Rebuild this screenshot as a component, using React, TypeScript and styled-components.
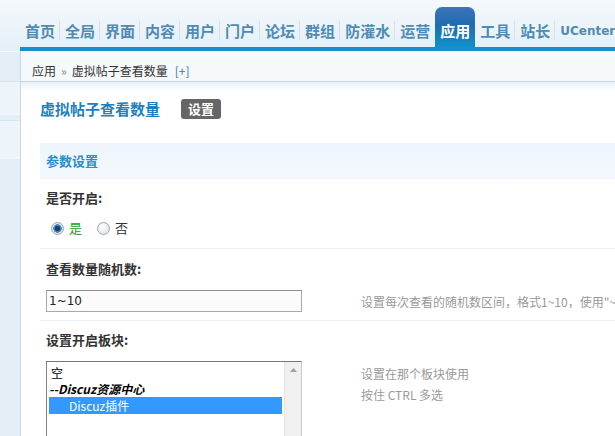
import styled, { createGlobalStyle } from "styled-components";

const GlobalStyle = createGlobalStyle`
  html, body {
    margin: 0;
    padding: 0;
  }
  body {
    width: 615px;
    height: 436px;
    overflow: hidden;
    background: #fff;
    font-family: "Noto Sans CJK SC", "DejaVu Sans", sans-serif;
    font-size: 12px;
    color: #333;
  }
`;

const Page = styled.div`
  display: flex;
  flex-direction: column;
  width: 615px;
  height: 436px;
  overflow: hidden;
`;

const Header = styled.header`
  height: 51px;
  flex-shrink: 0;
  background: linear-gradient(#f4f9fc, #e5eff7);
  display: flex;
  flex-direction: column;
  justify-content: flex-end;
`;

const Nav = styled.nav`
  display: flex;
  align-items: flex-end;
  height: 40px;
  padding-left: 20px;
`;

const NavItem = styled.a<{ $active?: boolean; $sep?: boolean; $latin?: boolean }>`
  position: relative;
  box-sizing: border-box;
  height: 40px;
  padding: 15px 5px 0;
  line-height: 18px;
  font-size: ${(p) => (p.$latin ? "12px" : "15px")};
  font-family: ${(p) =>
    p.$latin ? '"DejaVu Sans", sans-serif' : '"Noto Sans CJK SC", sans-serif'};
  font-weight: 700;
  white-space: nowrap;
  color: ${(p) => (p.$active ? "#fff" : "#4f8bb3")};
  border-radius: 7px 7px 0 0;
  background: ${(p) =>
    p.$active ? "linear-gradient(#3d74b6, #1e6db3 45%, #1190c9)" : "transparent"};

  &::after {
    content: "";
    display: ${(p) => (p.$sep ? "block" : "none")};
    position: absolute;
    right: 0;
    top: 14px;
    width: 1px;
    height: 19px;
    background: #d2e1ec;
  }
`;

const NavBar = styled.div`
  height: 4px;
  margin-left: 20px;
  background: #1590c8;
`;

const Body = styled.div`
  flex: 1;
  display: flex;
  min-height: 0;
`;

const Sidebar = styled.aside`
  width: 20px;
  flex-shrink: 0;
  background: #e4eef6;
  display: flex;
  flex-direction: column;
`;

const SideItem = styled.div<{ $h: number; $light?: boolean }>`
  height: ${(p) => p.$h}px;
  background: ${(p) => (p.$light ? "#eef5fa" : "#e4eef6")};
  border-top: 1px solid ${(p) => (p.$light ? "#d6e4ee" : "#f3f8fb")};
`;

const Main = styled.main`
  flex: 1;
  min-width: 0;
  border-left: 1px solid #c4d8e7;
  overflow: hidden;
  display: flex;
  flex-direction: column;
`;

const Breadcrumb = styled.div`
  height: 32px;
  box-sizing: border-box;
  padding: 10px 0 0 11px;
  line-height: 20px;
  background: #f5f9fc;
  border-bottom: 1px solid #cdd2d6;
  font-size: 12px;
  color: #333;
  white-space: nowrap;
`;

const Raquo = styled.span`
  color: #888;
  margin: 0 5px;
`;

const AddLink = styled.span`
  color: #3c74b8;
  margin-left: 7px;
`;

const Content = styled.div`
  flex: 1;
  padding-left: 19px;
  background: linear-gradient(#e6f1f9, #fff 9px) no-repeat;
`;

const TitleRow = styled.div`
  display: flex;
  align-items: center;
  gap: 21px;
  height: 20px;
  margin: 17px 0 24px;
`;

const PageTitle = styled.h1`
  margin: 0;
  font-size: 15px;
  line-height: 20px;
  font-weight: 700;
  color: #1e80bf;
`;

const Badge = styled.span`
  display: inline-block;
  height: 20px;
  line-height: 20px;
  padding: 0 7px;
  border-radius: 3px;
  background: #666;
  color: #fff;
  font-size: 13px;
  font-weight: 700;
`;

const SectionBand = styled.div`
  height: 36px;
  line-height: 36px;
  padding-left: 6px;
  background: linear-gradient(#eef5fc, #f3f8fd);
  border-bottom: 1px solid #f0f4f8;
  box-sizing: border-box;
  font-size: 13px;
  font-weight: 700;
  color: #2a8ec8;
`;

const LabelRow = styled.div<{ $top: number }>`
  padding: ${(p) => p.$top}px 6px 0;
  line-height: 18px;
  font-size: 13px;
  font-weight: 700;
  color: #333;
`;

const FieldRow = styled.div<{ $top: number; $bottom: number; $line?: boolean }>`
  display: flex;
  padding: ${(p) => `${p.$top}px 0 ${p.$bottom}px`};
  border-bottom: ${(p) => (p.$line ? "1px solid #eaf1f7" : "none")};
`;

const InputCell = styled.div`
  width: 321px;
  flex-shrink: 0;
  box-sizing: border-box;
  padding-left: 6px;
`;

const RadioGroup = styled.div`
  display: flex;
  align-items: center;
  height: 20px;
  padding-left: 6px;
`;

const RadioLabel = styled.label<{ $on?: boolean }>`
  display: flex;
  align-items: center;
  margin-right: 10px;
  font-size: 13px;
  line-height: 18px;
  color: ${(p) => (p.$on ? "#22a022" : "#333")};
`;

const Radio = styled.span<{ $checked?: boolean }>`
  box-sizing: border-box;
  width: 13px;
  height: 13px;
  margin: 0 5px 0 5px;
  border-radius: 50%;
  border: 1px solid #9aa6b0;
  background: ${(p) =>
    p.$checked
      ? "radial-gradient(circle, #1d3f63 0 2.5px, #3f88bd 3px 4px, #dfe7ee 4.5px)"
      : "radial-gradient(circle at 40% 35%, #fff, #d8dde2)"};
`;

const TextInput = styled.div`
  box-sizing: border-box;
  width: 256px;
  height: 22px;
  padding-left: 2px;
  line-height: 20px;
  border: 1px solid #a9a9a9;
  border-top-color: #8f8f8f;
  background: #fbfbfb;
  font-family: "DejaVu Sans", sans-serif;
  font-size: 12px;
  color: #222;
`;

const Desc = styled.div<{ $center?: boolean }>`
  display: flex;
  flex-direction: column;
  justify-content: ${(p) => (p.$center ? "center" : "flex-start")};
  padding-top: ${(p) => (p.$center ? 0 : 2)}px;
  line-height: 21px;
  font-size: 12px;
  color: #999;
  white-space: nowrap;
`;

const ListBox = styled.div`
  box-sizing: border-box;
  width: 256px;
  height: 110px;
  display: flex;
  border: 1px solid #c9c9c9;
  border-top-color: #777;
  border-left-color: #808080;
  background: #fff;
`;

const Options = styled.div`
  flex: 1;
  padding: 3px 2px 0;
`;

const Option = styled.div<{ $selected?: boolean; $group?: boolean; $indent?: boolean }>`
  height: ${(p) => (p.$selected ? 17 : 16)}px;
  line-height: ${(p) => (p.$selected ? 17 : 16)}px;
  padding-left: ${(p) => (p.$indent ? 20 : p.$group ? 0 : 2)}px;
  font-size: 12px;
  font-weight: ${(p) => (p.$group ? 700 : 400)};
  font-style: ${(p) => (p.$group ? "italic" : "normal")};
  color: ${(p) => (p.$selected ? "#fff" : "#000")};
  background: ${(p) => (p.$selected ? "#3399ff" : "transparent")};
  white-space: nowrap;
`;

const ScrollTrack = styled.div`
  width: 17px;
  flex-shrink: 0;
  background: #f0f0f0;
  border-left: 1px solid #e4e4e4;
  display: flex;
  justify-content: center;
  align-items: flex-start;
  padding-top: 6px;
  box-sizing: border-box;
`;

const navItems = [
  "首页", "全局", "界面", "内容", "用户", "门户", "论坛",
  "群组", "防灌水", "运营", "应用", "工具", "站长", "UCenter",
];

export default function App() {
  const activeIndex = navItems.indexOf("应用");
  return (
    <>
      <GlobalStyle />
      <Page>
        <Header>
          <Nav>
            {navItems.map((t, i) => (
              <NavItem
                key={t}
                $active={i === activeIndex}
                $latin={t === "UCenter"}
                $sep={i !== activeIndex && i !== activeIndex - 1 && i !== navItems.length - 1}
              >
                {t}
              </NavItem>
            ))}
          </Nav>
          <NavBar />
        </Header>
        <Body>
          <Sidebar>
            <SideItem $h={31} />
            <SideItem $h={35} $light />
            <SideItem $h={6} />
            <SideItem $h={40} $light />
            <SideItem $h={300} />
          </Sidebar>
          <Main>
            <Breadcrumb>
              应用<Raquo>»</Raquo>虚拟帖子查看数量<AddLink>[+]</AddLink>
            </Breadcrumb>
            <Content>
              <TitleRow>
                <PageTitle>虚拟帖子查看数量</PageTitle>
                <Badge>设置</Badge>
              </TitleRow>
              <SectionBand>参数设置</SectionBand>

              <LabelRow $top={10}>是否开启:</LabelRow>
              <FieldRow $top={11} $bottom={10} $line>
                <RadioGroup>
                  <RadioLabel $on>
                    <Radio $checked />是
                  </RadioLabel>
                  <RadioLabel>
                    <Radio />否
                  </RadioLabel>
                </RadioGroup>
              </FieldRow>

              <LabelRow $top={11}>查看数量随机数:</LabelRow>
              <FieldRow $top={12} $bottom={8} $line>
                <InputCell>
                  <TextInput>1~10</TextInput>
                </InputCell>
                <Desc $center>设置每次查看的随机数区间，格式1~10，使用"~"分隔</Desc>
              </FieldRow>

              <LabelRow $top={10}>设置开启板块:</LabelRow>
              <FieldRow $top={12} $bottom={0}>
                <InputCell>
                  <ListBox>
                    <Options>
                      <Option>空</Option>
                      <Option $group>--Discuz资源中心</Option>
                      <Option $indent $selected>Discuz插件</Option>
                    </Options>
                    <ScrollTrack>
                      <svg width="7" height="4" viewBox="0 0 7 4">
                        <path d="M0 4 L3.5 0 L7 4 Z" fill="#a0a0a0" />
                      </svg>
                    </ScrollTrack>
                  </ListBox>
                </InputCell>
                <Desc>
                  <span>设置在那个板块使用</span>
                  <span>按住 CTRL 多选</span>
                </Desc>
              </FieldRow>
            </Content>
          </Main>
        </Body>
      </Page>
    </>
  );
}
